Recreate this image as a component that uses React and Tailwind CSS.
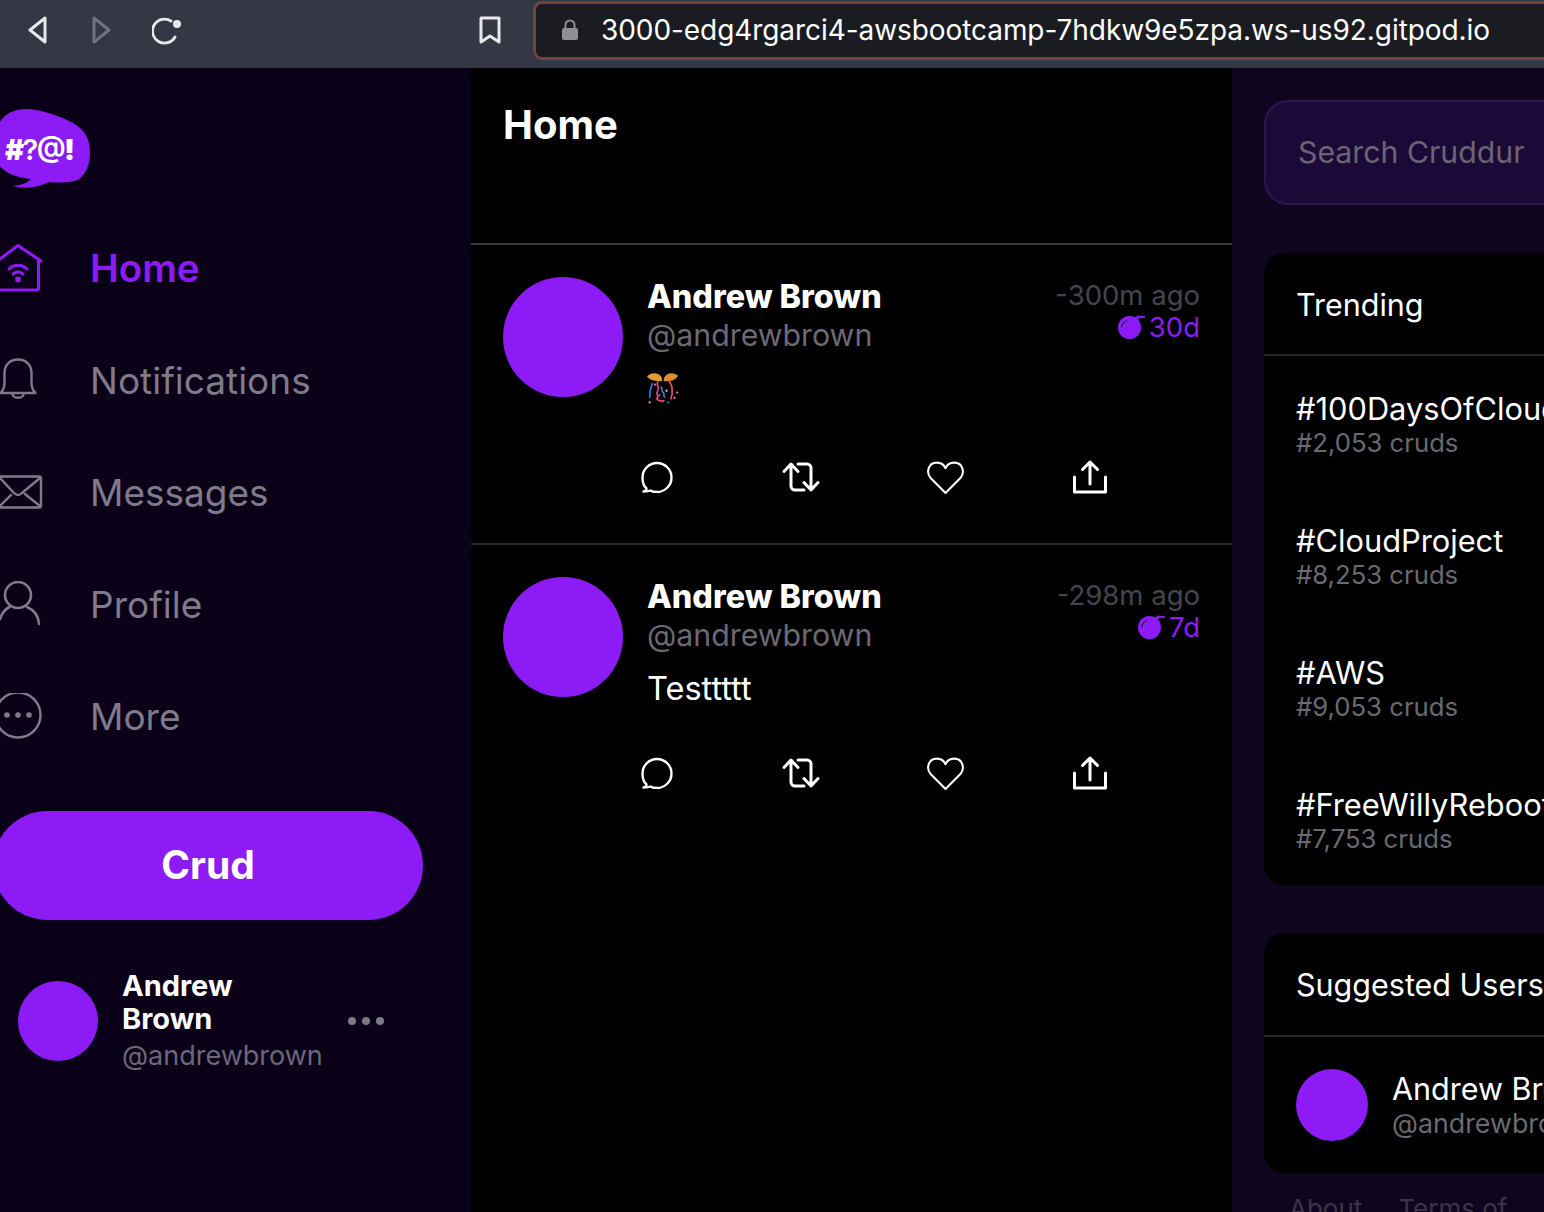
const purple = 'bg-[#8c1bf6]';

const Stroke = ({ className, viewBox, children, width = 2 }) => (
  <svg className={className} viewBox={viewBox} fill="none" stroke="currentColor" strokeWidth={width} strokeLinecap="round" strokeLinejoin="round">
    {children}
  </svg>
);

const nav = [
  {
    label: 'Home',
    active: true,
    icon: (
      <Stroke className="h-[50px] w-[44px] shrink-0" viewBox="0 0 44 50" width={3}>
        <path d="M0 15 18 1.500 41 17" />
        <path d="M38.500 16v28a2 2 0 0 1-2 2H0" />
        <path d="M9 25c5.500-5 12.500-5 18 0M13 30c3.500-3 6.500-3 10 0" />
        <circle cx="18" cy="35.500" r="1.400" fill="currentColor" />
      </Stroke>
    ),
  },
  {
    label: 'Notifications',
    icon: (
      <Stroke className="h-[46px] w-[44px] shrink-0" viewBox="0 0 44 46" width={2.4}>
        <path d="M.5 35c3-3 4-6 4-10V15C4.500 7 10 1.500 18 1.500S31.500 7 31.500 15v10c0 4 1 7 4 10Z" />
        <path d="M12.500 36c.5 5 10.500 5 11 0" />
      </Stroke>
    ),
  },
  {
    label: 'Messages',
    icon: (
      <Stroke className="h-[36px] w-[44px] shrink-0" viewBox="0 0 44 36" width={2.4}>
        <path d="M0 1.500h39.500a1.500 1.500 0 0 1 1.500 1.500v28a1.500 1.500 0 0 1-1.500 1.500H0" />
        <path d="M0 3l14 15c2.500 2.500 5.500 2.500 8 0L40 3M0 31l11-11M40 31 25 19" />
      </Stroke>
    ),
  },
  {
    label: 'Profile',
    icon: (
      <Stroke className="h-[48px] w-[44px] shrink-0" viewBox="0 0 44 48" width={2.6}>
        <circle cx="18" cy="14" r="13" />
        <path d="M0 38c2-6 5-10 9.500-12M27 26c7 3 11.500 9 12 17" />
      </Stroke>
    ),
  },
  {
    label: 'More',
    icon: (
      <svg className="h-[48px] w-[44px] shrink-0" viewBox="0 0 44 48" fill="none" stroke="currentColor" strokeWidth="2.400">
        <circle cx="18" cy="22" r="22.500" />
        <circle cx="7" cy="22" r="2.800" fill="currentColor" stroke="none" />
        <circle cx="18" cy="22" r="2.800" fill="currentColor" stroke="none" />
        <circle cx="29" cy="22" r="2.800" fill="currentColor" stroke="none" />
      </svg>
    ),
  },
];

const trends = [
  ['#100DaysOfCloud', '#2,053 cruds'],
  ['#CloudProject', '#8,253 cruds'],
  ['#AWS', '#9,053 cruds'],
  ['#FreeWillyReboot', '#7,753 cruds'],
];

function Logo() {
  return (
    <svg className="-ml-1 block h-[80px] w-[94px]" viewBox="0 0 94 80">
      <path
        fill="#8c1bf6"
        d="M30 1c14 0 34 7 47 14 12 7 17 16 17 30 0 11-4 21-11 26-7 4-19 4-30 3-8 4-22 8-36 4 6-1 14-2 18-7-12-1-26-5-33-15C-4 46-2 18 8 9 13 4 21 1 30 1Z"
      />
      <text x="9" y="52" fill="#fff" fontSize="29" fontFamily="Inter, sans-serif" textLength="70">
        <tspan fontWeight="900">#</tspan>
        <tspan fontWeight="600">?@</tspan>
        <tspan fontWeight="900">!</tspan>
      </text>
    </svg>
  );
}

function Bomb() {
  return (
    <svg className="h-[24px] w-[28px]" viewBox="0 0 28 24" fill="#8c1bf6">
      <circle cx="11.500" cy="12.500" r="11.500" />
      <path d="M15 7c1-4 6-6 11-5" fill="none" stroke="#8c1bf6" strokeWidth="2.200" strokeLinecap="round" />
      <path d="M20 1v3" fill="none" stroke="#8c1bf6" strokeWidth="1.600" strokeLinecap="round" />
      <path d="M3.500 12c.5-3 2.500-5 5-6" fill="none" stroke="#000" strokeWidth="1" strokeLinecap="round" />
    </svg>
  );
}

function Confetti() {
  return (
    <svg className="h-[32px] w-[32px]" viewBox="0 0 36 36" fill="none" strokeWidth="2" strokeLinecap="round">
      <path d="M17 9C10 10 3 8 0 4c3-4 10-5 14-2 3 2 3 5 3 7Z" fill="#e09a3a" />
      <path d="M19 9c7 1 13-1 16-6-3-3-10-4-13-1-3 2-3 5-3 7Z" fill="#d98f30" />
      <path d="M6 12c-2 5-3 10-3 15" stroke="#2f6fe0" />
      <path d="M12 10c-2 4 3 6 0 10s3 6-1 9c2 3 5 3 8 2" stroke="#e0457b" />
      <path d="M25 9c4 6 4 14 2 20" stroke="#e0457b" />
      <path d="M16 16c3 2-1 4 2 6s-1 3 2 5" stroke="#4a72c8" />
      <circle cx="3" cy="33" r="1.300" fill="#f2c230" />
      <circle cx="9" cy="13" r="1.300" fill="#ef6fa0" />
      <circle cx="22" cy="20" r="1.300" fill="#f2c230" />
      <circle cx="34" cy="22" r="1.300" fill="#e09a3a" />
      <circle cx="31" cy="28" r="1.300" fill="#ef6fa0" />
      <circle cx="24" cy="33" r="1.300" fill="#4a72c8" />
      <circle cx="14" cy="25" r="1.300" fill="#4a72c8" />
    </svg>
  );
}

function Actions() {
  return (
    <div className="-ml-[63px] flex h-[34px] text-white">
      <div className="flex w-[144.500px] items-center justify-center pl-[2px]">
        <Stroke className="h-[32px] w-[32px]" viewBox="0 0 32 32" width={2.4}>
          <path d="M2.500 30.500c2 0 3-.5 3-3C2.500 25 1.500 21 1.500 16.500a14.500 14.500 0 1 1 14.500 14.500c-3 0-5-.5-6.500-1.500-2 1-4.500 1-7 1Z" />
        </Stroke>
      </div>
      <div className="flex w-[144.500px] items-center justify-center">
        <Stroke className="h-[30px] w-[38px]" viewBox="0 0 38 30" width={3}>
          <path d="M2 9.500 9 2l7 7.500M9 3v21a4 4 0 0 0 4 4h9" />
          <path d="M36 20.500 29 28l-7-7.500M29 27V6a4 4 0 0 0-4-4h-9" />
        </Stroke>
      </div>
      <div className="flex w-[144.500px] items-center justify-center">
        <Stroke className="h-[33px] w-[37px]" viewBox="0 0 36 32" width={2}>
          <path d="M18 31 3.500 16.500C-1 11.500 1 1.500 9.500 1.500c4 0 7 2 8.500 5.500 1.500-3.500 4.500-5.500 8.500-5.500 8.500 0 10.500 10 6 15Z" />
        </Stroke>
      </div>
      <div className="flex w-[144.500px] items-center justify-center">
        <Stroke className="h-[34px] w-[36px]" viewBox="0 0 36 34" width={3}>
          <path d="M18 24V2.500M10.500 9.500 18 2l7.500 7.500" />
          <path d="M2.500 17v15h31V17" />
        </Stroke>
      </div>
    </div>
  );
}

function Activity({ time, expires, children, contentClass, last }) {
  return (
    <article className={`flex gap-[24px] px-[32px] pt-[32px] ${last ? '' : 'border-b-2 border-[#26262c] pb-[49px]'}`}>
      <div className={`h-[120px] w-[120px] shrink-0 rounded-full ${purple}`} />
      <div className="min-w-0 flex-1">
        <div className="flex justify-between">
          <div>
            <div className="text-[32.300px] leading-[40px] font-extrabold text-white">Andrew Brown</div>
            <div className="text-[30.300px] leading-[36px] text-[#6c6974]">@andrewbrown</div>
          </div>
          <div className="text-right text-[27.500px] leading-[32px]">
            <div className="mt-[2px] text-[#454550]">{time}</div>
            <div className="flex items-center justify-end gap-[3px] text-[#8c1bf6]">
              <Bomb />
              <span>{expires}</span>
            </div>
          </div>
        </div>
        <div className={contentClass}>{children}</div>
        <Actions />
      </div>
    </article>
  );
}

export default function App() {
  return (
    <div className="h-[1212px] w-[1544px] overflow-hidden bg-black font-['Inter',sans-serif]">
      <header className="flex h-[68px] items-center bg-[#343845]">
        <div className="mb-[8px] flex items-center pl-[27px] text-[#e8e8ea]">
          <Stroke className="h-[28px] w-[22px]" viewBox="0 0 22 28" width={3}>
            <path d="M18 2 3 14l15 12Z" />
          </Stroke>
          <Stroke className="ml-[42px] h-[28px] w-[22px] text-[#70737c]" viewBox="0 0 22 28" width={3}>
            <path d="M3 2l15 12L3 26Z" />
          </Stroke>
          <svg className="ml-[39px] h-[30px] w-[30px]" viewBox="0 0 30 30" fill="none" stroke="currentColor" strokeWidth="2.800" strokeLinecap="round">
            <path d="M23 22a12 12 0 1 1-4-16" />
            <circle cx="25" cy="9" r="4" fill="currentColor" stroke="none" />
          </svg>
          <Stroke className="ml-[297px] h-[28px] w-[22px]" viewBox="0 0 22 28" width={3}>
            <path d="M2 2h18v24l-9-6-9 6Z" />
          </Stroke>
        </div>
        <div className="mb-[8px] ml-[32px] flex h-[59px] flex-1 items-center rounded-l-[9px] border-[3px] border-r-0 border-[#72443f] bg-[#1b1c22] pl-[25px] text-[28px] text-white">
          <svg className="mr-[22px] h-[22px] w-[18px]" viewBox="0 0 18 22" fill="#8f9096">
            <rect x="1" y="9" width="16" height="12" rx="2" />
            <path d="M4.500 9V6a4.500 4.500 0 0 1 9 0v3" fill="none" stroke="#8f9096" strokeWidth="2" />
          </svg>
          <span className="tracking-[-0.07px] whitespace-nowrap">3000-edg4rgarci4-awsbootcamp-7hdkw9e5zpa.ws-us92.gitpod.io</span>
        </div>
      </header>

      <div className="grid h-[1144px] grid-cols-[471px_761px_1fr]">
        <nav className="bg-[#0a0119] pt-[40px]">
          <Logo />
          <ul className="mt-[25px] text-[#807b8a]">
            {nav.map((item) => (
              <li key={item.label} className={`flex h-[112px] items-center gap-[46px] ${item.active ? 'text-[#8c1bf6]' : ''}`}>
                {item.icon}
                <span className={item.active ? 'text-[38.500px] font-semibold' : 'text-[37px]'}>{item.label}</span>
              </li>
            ))}
          </ul>
          <button className={`mt-[38px] -ml-[7px] block h-[109px] w-[430px] rounded-full text-[39px] font-bold text-white ${purple}`}>Crud</button>
          <div className="mt-[49px] ml-[18px] flex w-[366px] items-center">
            <div className={`h-[80px] w-[80px] shrink-0 rounded-full ${purple}`} />
            <div className="ml-[24px] flex-1">
              <div className="w-[130px] text-[29px] leading-[33px] font-bold text-white">Andrew Brown</div>
              <div className="mt-[4px] text-[27px] leading-[34px] text-[#6c6877]">@andrewbrown</div>
            </div>
            <div className="flex gap-[6px]">
              <span className="h-[8px] w-[8px] rounded-full bg-[#7d7a85]" />
              <span className="h-[8px] w-[8px] rounded-full bg-[#7d7a85]" />
              <span className="h-[8px] w-[8px] rounded-full bg-[#7d7a85]" />
            </div>
          </div>
        </nav>

        <main className="bg-black">
          <div className="h-[177px] border-b-2 border-[#38383f] px-[32px] pt-[32px]">
            <h1 className="text-[40px] leading-[50px] font-bold text-white">Home</h1>
          </div>
          <Activity time="-300m ago" expires="30d" contentClass="mt-[20px] mb-[47px] h-[40px]">
            <Confetti />
          </Activity>
          <Activity last time="-298m ago" expires="7d" contentClass="mt-[16px] mb-[47px] text-[32.500px] leading-[40px] text-white">
            Testtttt
          </Activity>
        </main>

        <aside className="w-[400px] bg-[#0f051f] px-[32px] pt-[32px]">
          <div className="flex h-[105px] items-center rounded-[24px] border-2 border-[#2b1650] bg-[#1b0a38] pl-[32px] text-[30.250px] whitespace-nowrap text-[#6a6475]">
            Search Cruddur
          </div>
          <section className="mt-[48px] h-[632px] overflow-hidden rounded-[20px] bg-black">
            <div className="h-[103px] border-b-2 border-[#26262c] pt-[32px] pl-[32px] text-[30.500px] leading-[40px] text-white">Trending</div>
            {trends.map(([tag, count]) => (
              <div key={tag} className="h-[132px] pt-[34px] pl-[32px] whitespace-nowrap">
                <div className="text-[30.800px] leading-[38px] text-white">{tag}</div>
                <div className="text-[25.700px] leading-[30px] text-[#6a6a70]">{count}</div>
              </div>
            ))}
          </section>
          <section className="mt-[48px] h-[240px] overflow-hidden rounded-[20px] bg-black">
            <div className="h-[104px] border-b-2 border-[#26262c] pt-[32px] pl-[32px] text-[30.500px] leading-[40px] whitespace-nowrap text-white">Suggested Users</div>
            <div className="flex items-center pt-[32px] pl-[32px] whitespace-nowrap">
              <div className={`h-[72px] w-[72px] shrink-0 rounded-full ${purple}`} />
              <div className="-mt-[2px] ml-[24px]">
                <div className="text-[30.500px] leading-[38px] text-white">Andrew Brown</div>
                <div className="text-[26.800px] leading-[30px] text-[#6a6a70]">@andrewbrown</div>
              </div>
            </div>
          </section>
          <div className="mt-[16px] flex gap-[36px] pl-[25px] text-[26px] text-[#3b3546]">
            <span>About</span>
            <span className="w-[130px]">Terms of Service</span>
          </div>
        </aside>
      </div>
    </div>
  );
}
